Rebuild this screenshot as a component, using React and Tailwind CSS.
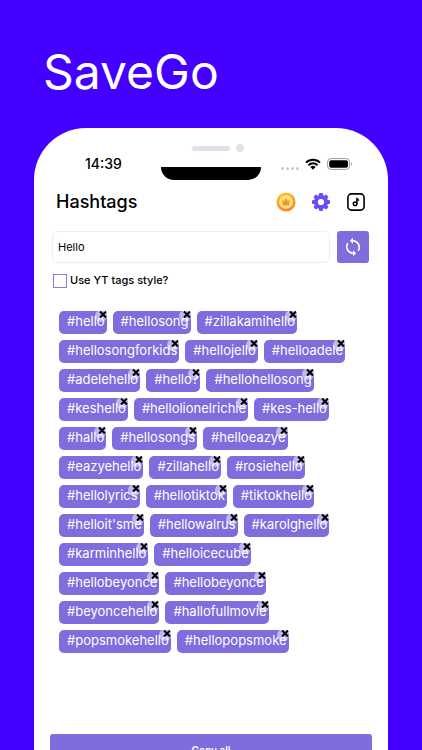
import React, { useState } from "react";

const INITIAL_TAGS = [
  "#hello", "#hellosong", "#zillakamihello",
  "#hellosongforkids", "#hellojello", "#helloadele",
  "#adelehello", "#hello?", "#hellohellosong",
  "#keshello", "#hellolionelrichie", "#kes-hello",
  "#hallo", "#hellosongs", "#helloeazye",
  "#eazyehello", "#zillahello", "#rosiehello",
  "#hellolyrics", "#hellotiktok", "#tiktokhello",
  "#helloit'sme", "#hellowalrus", "#karolghello",
  "#karminhello", "#helloicecube",
  "#hellobeyonce", "#hellobeyonce",
  "#beyoncehello", "#hallofullmovie",
  "#popsmokehello", "#hellopopsmoke",
].map((text, id) => ({ id, text }));

function WifiIcon() {
  return (
    <svg viewBox="0 0 16 12" className="h-3 w-4" aria-hidden="true">
      <g fill="none" stroke="#000" strokeWidth="2">
        <path d="M1 4.6a10 10 0 0 1 14 0" />
        <path d="M3.5 7.2a6.4 6.4 0 0 1 9 0" />
      </g>
      <path d="M5.4 9a3.7 3.7 0 0 1 5.2 0L8 11.8z" />
    </svg>
  );
}

function BatteryIcon() {
  return (
    <svg viewBox="0 0 26 12" className="h-3 w-[26px]" aria-hidden="true">
      <rect x="0.6" y="0.6" width="22" height="10.8" rx="3.4" fill="none" stroke="#9b9b9b" />
      <rect x="2.2" y="2.2" width="18.8" height="7.6" rx="2" />
      <path d="M24 4.2c1.3.5 1.3 3.1 0 3.6z" fill="#9b9b9b" />
    </svg>
  );
}

function CoinIcon() {
  return (
    <svg viewBox="0 0 20 20" className="size-5" aria-hidden="true">
      <defs>
        <linearGradient id="coinRim" x1="0" y1="0" x2="0.4" y2="1">
          <stop offset="0" stopColor="#ffc928" />
          <stop offset="1" stopColor="#f98a1c" />
        </linearGradient>
      </defs>
      <circle cx="10" cy="10" r="9.6" fill="url(#coinRim)" />
      <circle cx="10" cy="10" r="6.8" fill="#ffe28a" />
      <path d="M6.1 7.6l2.1 1.6L10 6l1.8 3.2 2.1-1.6-.8 5.8H6.9z" fill="#f8951d" />
    </svg>
  );
}

function GearIcon() {
  return (
    <svg viewBox="0 0 20 20" className="size-5" aria-hidden="true">
      <g fill="#6650f2">
        {[0, 45, 90, 135].map((angle) => (
          <rect key={angle} x="7.9" y="1" width="4.2" height="18" rx="1.2" transform={`rotate(${angle} 10 10)`} />
        ))}
        <circle cx="10" cy="10" r="7" />
      </g>
      <circle cx="10" cy="10" r="3.1" fill="#fff" />
    </svg>
  );
}

function MusicIcon() {
  return (
    <svg viewBox="0 0 20 20" className="size-5" fill="none" stroke="#000" aria-hidden="true">
      <rect x="1.9" y="1.9" width="16.2" height="16.2" rx="3.6" strokeWidth="1.6" />
      <circle cx="9.1" cy="11.7" r="1.8" strokeWidth="1.5" />
      <path d="M10.9 11.7V5.8c.1 1.6 1 2.3 2.2 2.4" strokeWidth="1.5" />
    </svg>
  );
}

function RefreshIcon() {
  return (
    <svg viewBox="0 0 20 20" className="size-5" fill="none" stroke="#fff" aria-hidden="true">
      <path d="M8.6 3.8h1.6a6.5 6.5 0 0 1 5 10" strokeWidth="1.6" />
      <path d="M11.4 16.2H9.8a6.5 6.5 0 0 1-5-10" strokeWidth="1.6" />
      <path d="M10 .8v6L6.8 3.8zM10 13.2v6l3.2-3z" fill="#fff" stroke="none" />
    </svg>
  );
}

function Tag({ text, onRemove }) {
  return (
    <li className="relative h-[23px] rounded-[5px] bg-[#7f6cdd] pr-0.5 pl-2 text-[13px] leading-5 text-white">
      {text}
      <button
        type="button"
        aria-label={`Remove ${text}`}
        onClick={onRemove}
        className="absolute -top-px right-0 flex h-3 w-3 items-center justify-center rounded-full bg-white/50"
      >
        <svg viewBox="0 0 12 12" className="size-3" fill="none" stroke="#000" strokeWidth="2" aria-hidden="true">
          <path d="M5 1.5l6 6M11 1.5l-6 6" />
        </svg>
      </button>
    </li>
  );
}

export default function App() {
  const [tags, setTags] = useState(INITIAL_TAGS);
  const [query, setQuery] = useState("Hello");

  return (
    <div className="h-screen overflow-hidden bg-[#4400ff] font-['Inter',sans-serif] text-black">
      <h1 className="px-[43px] pt-11 text-5xl leading-[56px] text-white">SaveGo</h1>

      <main className="mx-[34px] mt-7 min-h-screen rounded-t-[52px] bg-white px-4 pt-4">
        <div className="flex h-2 items-center justify-center gap-1.5 pl-[14px]">
          <span className="h-[5px] w-[38px] rounded-full bg-[#e2e1e9]" />
          <span className="size-2 rounded-full bg-[#e2e1e9]" />
        </div>

        <div className="mt-0.5 grid h-[26px] grid-cols-[1fr_100px_1fr]">
          <time className="self-center pb-1.5 pl-[35px] text-sm leading-4 font-medium">14:39</time>
          <span className="h-[13px] self-end rounded-b-[14px] bg-black" />
          <div className="flex items-center justify-end gap-1.5 pr-[19px] pb-1.5">
            <span className="flex gap-[2px] pt-2">
              {[0, 1, 2, 3].map((dot) => (
                <span key={dot} className="size-[3px] rounded-full bg-[#c9c9c9]" />
              ))}
            </span>
            <WifiIcon />
            <BatteryIcon />
          </div>
        </div>

        <header className="mt-2 flex h-7 items-center justify-between pr-1.5 pl-1.5">
          <h2 className="text-lg leading-7 font-medium">Hashtags</h2>
          <nav className="flex gap-[15px]">
            <button type="button" aria-label="Premium"><CoinIcon /></button>
            <button type="button" aria-label="Settings"><GearIcon /></button>
            <button type="button" aria-label="Music"><MusicIcon /></button>
          </nav>
        </header>

        <form className="mt-[15px] flex gap-[7px] pr-[3px] pl-0.5" onSubmit={(e) => e.preventDefault()}>
          <input
            type="text"
            aria-label="Keyword"
            value={query}
            onChange={(e) => setQuery(e.target.value)}
            className="h-8 min-w-0 flex-1 rounded-[5px] border border-[#eeeeee] bg-white px-[5px] text-[11px] outline-none"
          />
          <button
            type="submit"
            aria-label="Refresh"
            className="flex size-8 items-center justify-center rounded-[3px] bg-[#7f6cdd]"
          >
            <RefreshIcon />
          </button>
        </form>

        <label className="mt-2.5 flex h-[15px] items-center gap-[3px] pl-[3px] text-[11px] leading-[15px] font-medium">
          <input
            type="checkbox"
            className="size-[14px] appearance-none border border-[#8d7ce8] bg-white checked:bg-[#7f6cdd]"
          />
          Use YT tags style?
        </label>

        <ul className="mt-[23px] flex min-h-[341px] flex-wrap content-start gap-1.5 pr-[22px] pl-[9px]">
          {tags.map((tag) => (
            <Tag
              key={tag.id}
              text={tag.text}
              onRemove={() => setTags(tags.filter((t) => t.id !== tag.id))}
            />
          ))}
        </ul>

        <button
          type="button"
          className="mt-[81px] block h-8 w-full rounded-[3px] bg-[#7f6cdd] text-[10px] leading-4 font-semibold text-white"
        >
          Copy all
        </button>
      </main>
    </div>
  );
}
